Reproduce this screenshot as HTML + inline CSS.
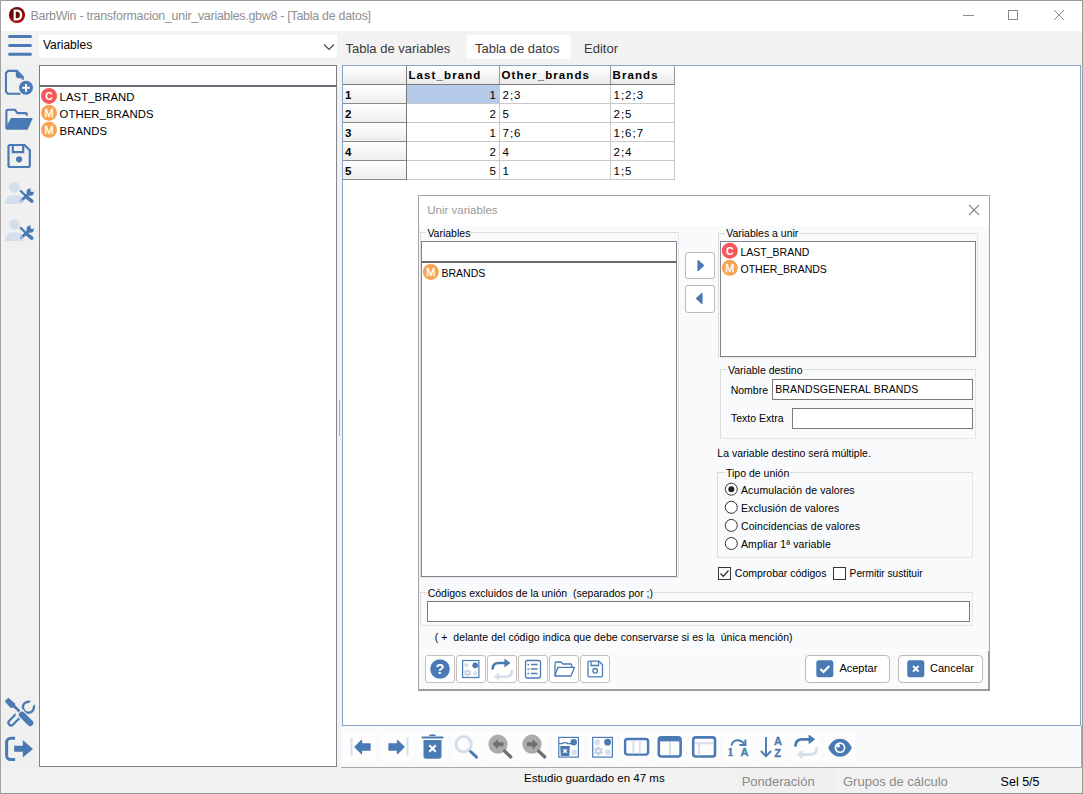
<!DOCTYPE html>
<html><head><meta charset="utf-8"><title>BarbWin</title>
<style>
html,body{margin:0;padding:0;}
body{width:1083px;height:794px;position:relative;overflow:hidden;background:#f2f2f2;font-family:"Liberation Sans", sans-serif;}
.r{position:absolute;display:block;}
.t{position:absolute;white-space:pre;line-height:1;}
</style></head><body>
<div class="r" style="left:0px;top:0px;width:1083px;height:794px;background:#f2f2f2;"></div>
<div class="r" style="left:1px;top:1px;width:1081px;height:30px;background:#fff;"></div>
<div class="r" style="left:0px;top:0px;width:1083px;height:1px;background:#9a9a9a;"></div>
<div class="r" style="left:0px;top:0px;width:1px;height:794px;background:#a3a3a3;"></div>
<div class="r" style="left:1082px;top:0px;width:1px;height:794px;background:#9a9a9a;"></div>
<div class="r" style="left:0px;top:793px;width:1083px;height:1px;background:#9a9a9a;"></div>
<svg class="r" style="left:8px;top:6px;" width="19" height="19" viewBox="0 0 19 19"><defs><radialGradient id="dg" cx="40%" cy="35%" r="70%"><stop offset="0" stop-color="#4a0808"/><stop offset="0.55" stop-color="#7a0a0a"/><stop offset="1" stop-color="#c00808"/></radialGradient></defs>
<circle cx="9" cy="9" r="8.1" fill="url(#dg)"/>
<path d="M5.6 3.6 H9 C12.6 3.6 14.2 6 14.2 9 C14.2 12 12.6 14.4 9 14.4 H5.6 Z M7.8 5.8 V12.2 H9 C11 12.2 11.9 10.8 11.9 9 C11.9 7.2 11 5.8 9 5.8 Z" fill="#fff"/></svg>
<div class="t" style="left:30.50px;top:9.70px;font-size:12.4px;color:#8f8f8f;font-weight:normal;letter-spacing:-0.25px;">BarbWin - transformacion_unir_variables.gbw8 - [Tabla de datos]</div>
<div class="r" style="left:963px;top:15px;width:11px;height:1px;background:#8c8c8c;"></div>
<div class="r" style="left:1008px;top:10px;width:10px;height:10px;border:1px solid #8c8c8c;box-sizing:border-box;"></div>
<svg class="r" style="left:1053px;top:9px;" width="12" height="12" viewBox="0 0 12 12"><path d="M1 1 L11 11 M11 1 L1 11" stroke="#8c8c8c" stroke-width="1"/></svg>
<div class="r" style="left:2px;top:64px;width:37px;height:185px;background:#f0f0f0;"></div>
<div class="r" style="left:2px;top:694px;width:37px;height:74px;background:#f0f0f0;"></div>
<svg class="r" style="left:6px;top:33px;" width="28" height="24" viewBox="0 0 28 24"><g stroke="#4a7ab3" stroke-width="3" stroke-linecap="round"><path d="M3.6 3.6 H24.4"/><path d="M3.6 12.4 H24.4"/><path d="M3.6 21.2 H24.4"/></g></svg>
<svg class="r" style="left:3px;top:66px;" width="34" height="32" viewBox="0 0 34 32"><path d="M13 4.9 H5 L2.95 6.9 V25.8 L5 27.8 H17.6" fill="none" stroke="#4a7ab3" stroke-width="2.1"/>
<path d="M12.8 3.85 H14.3 L20.8 10.4 V13.8 H18.8 V12.2 H14.5 L12.8 10.5 Z" fill="#4a7ab3"/>
<circle cx="23" cy="21.8" r="7.8" fill="#f0f0f0"/>
<circle cx="23" cy="21.8" r="7" fill="#4a7ab3"/>
<path d="M23 17.9 V25.7 M19.1 21.8 H26.9" stroke="#fff" stroke-width="2"/></svg>
<svg class="r" style="left:4px;top:107px;" width="32" height="26" viewBox="0 0 32 26"><path d="M2.4 21.5 V4.2 a1.5 1.5 0 0 1 1.5 -1.5 H10.9 L13.5 6.1 H21.4 a1.5 1.5 0 0 1 1.5 1.5 V8.8" fill="none" stroke="#4a7ab3" stroke-width="2.1"/>
<path d="M7 11.1 H28.8 L23.7 22.7 H3 a1.6 1.6 0 0 1 -1.6 -1.6 Z" fill="#4a7ab3"/></svg>
<svg class="r" style="left:6px;top:143px;" width="27" height="27" viewBox="0 0 27 27"><path d="M2.5 3.5 a1.5 1.5 0 0 1 1.5 -1.5 H18.5 L23.8 7.2 V22.5 a1.5 1.5 0 0 1 -1.5 1.5 H4 a1.5 1.5 0 0 1 -1.5 -1.5 Z" fill="none" stroke="#4a7ab3" stroke-width="2.2"/>
<path d="M6.8 2.5 V9.2 H17.2 V2.5" fill="none" stroke="#4a7ab3" stroke-width="2.2"/>
<circle cx="13.1" cy="16.3" r="3.1" fill="#4a7ab3"/></svg>
<svg class="r" style="left:4px;top:181px;" width="32" height="24" viewBox="0 0 32 24"><circle cx="10.5" cy="6.3" r="5.4" fill="#d5dfeb"/>
<path d="M1 23 C1 17.5 3.5 14.2 10 14.2 C15 14.2 17 15 18.5 16.5 V23 Z" fill="#d5dfeb"/>
<g stroke="#4a7ab3" stroke-linecap="round"><path d="M16.8 10 L22.3 15.5" stroke-width="2.4"/><path d="M22.5 15.8 L27.8 20.2" stroke-width="3.6"/>
<path d="M17.6 19.6 L24.8 12.6" stroke-width="2.8"/></g>
<circle cx="26.2" cy="11.2" r="3.6" fill="#4a7ab3"/><circle cx="28.3" cy="9" r="2" fill="#f0f0f0"/><circle cx="17.9" cy="19.4" r="0.8" fill="#fff"/></svg>
<svg class="r" style="left:4px;top:218px;" width="32" height="24" viewBox="0 0 32 24"><circle cx="10.5" cy="6.3" r="5.4" fill="#d5dfeb"/>
<path d="M1 23 C1 17.5 3.5 14.2 10 14.2 C15 14.2 17 15 18.5 16.5 V23 Z" fill="#d5dfeb"/>
<g stroke="#4a7ab3" stroke-linecap="round"><path d="M16.8 10 L22.3 15.5" stroke-width="2.4"/><path d="M22.5 15.8 L27.8 20.2" stroke-width="3.6"/>
<path d="M17.6 19.6 L24.8 12.6" stroke-width="2.8"/></g>
<circle cx="26.2" cy="11.2" r="3.6" fill="#4a7ab3"/><circle cx="28.3" cy="9" r="2" fill="#f0f0f0"/><circle cx="17.9" cy="19.4" r="0.8" fill="#fff"/></svg>
<svg class="r" style="left:4px;top:696px;" width="34" height="34" viewBox="0 0 34 34"><circle cx="24.4" cy="11.2" r="6.7" fill="#4a7ab3"/><circle cx="24.4" cy="11.2" r="4.3" fill="#f0f0f0"/>
<path d="M25.5 10 L33.5 2" stroke="#f0f0f0" stroke-width="5"/>
<path d="M12.2 17.8 L5 25 a2.7 2.7 0 0 0 3.8 3.8 L15.6 22" fill="none" stroke="#4a7ab3" stroke-width="2.2"/>
<path d="M19 13.5 L12.5 20" stroke="#f0f0f0" stroke-width="4"/>
<path d="M10.5 10 L17.5 17" stroke="#f0f0f0" stroke-width="4.6"/>
<path d="M0.95 5.25 L4.35 2.08 L10.9 7.75 L11.1 11.15 L6.6 11.6 Z" fill="#4a7ab3" stroke="#4a7ab3" stroke-width="0.6" stroke-linejoin="round"/>
<path d="M10.5 10.5 L17.5 17.5" stroke="#4a7ab3" stroke-width="2.5"/>
<path d="M18 18.8 L26.2 27" stroke="#f0f0f0" stroke-width="8.4" stroke-linecap="round"/>
<path d="M18 18.8 L26.2 27" stroke="#4a7ab3" stroke-width="6.2" stroke-linecap="round"/></svg>
<svg class="r" style="left:4px;top:736px;" width="32" height="27" viewBox="0 0 32 27"><path d="M11.1 2.35 H6.6 a4 4 0 0 0 -4 4 V19.5 a4 4 0 0 0 4 4 H11.1" fill="none" stroke="#4a7ab3" stroke-width="3"/>
<path d="M10.1 9.7 H18.8 V4 L29 12.9 L18.8 21.6 V15.75 H10.1 Z" fill="#4a7ab3"/></svg>
<div class="r" style="left:39px;top:35px;width:298px;height:23px;background:#fff;"></div>
<div class="t" style="left:43.00px;top:39.04px;font-size:12px;color:#000;font-weight:normal;">Variables</div>
<svg class="r" style="left:323px;top:43px;" width="12" height="8" viewBox="0 0 12 8"><path d="M1 1.5 L6 6.5 L11 1.5" fill="none" stroke="#444" stroke-width="1.1"/></svg>
<div class="r" style="left:39px;top:65px;width:298px;height:22px;background:#fff;border:1px solid #7b7b7b;box-sizing:border-box;"></div>
<div class="r" style="left:39px;top:85px;width:298px;height:2px;background:#6b6e76;"></div>
<div class="r" style="left:39px;top:87px;width:298px;height:680px;background:#fff;border:1px solid #80858e;border-top:none;box-sizing:border-box;"></div>
<svg class="r" style="left:40px;top:87px;" width="18" height="18" viewBox="0 0 18 18"><circle cx="9" cy="8.900000000000006" r="8" fill="#f4585a"/><text x="9" y="12.800000000000006" text-anchor="middle" font-family="Liberation Sans" font-weight="bold" font-size="10.5" fill="#fff">C</text></svg>
<svg class="r" style="left:40px;top:104px;" width="18" height="18" viewBox="0 0 18 18"><circle cx="9" cy="8.799999999999997" r="8" fill="#f8a34f"/><text x="9" y="12.799999999999997" text-anchor="middle" font-family="Liberation Sans" font-weight="normal" font-size="11" fill="#fff" stroke="#fff" stroke-width="0.35">M</text></svg>
<svg class="r" style="left:40px;top:121px;" width="18" height="18" viewBox="0 0 18 18"><circle cx="9" cy="8.800000000000011" r="8" fill="#f8a34f"/><text x="9" y="12.800000000000011" text-anchor="middle" font-family="Liberation Sans" font-weight="normal" font-size="11" fill="#fff" stroke="#fff" stroke-width="0.35">M</text></svg>
<div class="t" style="left:59.50px;top:91.93px;font-size:11.3px;color:#000;font-weight:normal;letter-spacing:0.1px;">LAST_BRAND</div>
<div class="t" style="left:59.50px;top:108.93px;font-size:11.3px;color:#000;font-weight:normal;letter-spacing:0.1px;">OTHER_BRANDS</div>
<div class="t" style="left:59.50px;top:125.93px;font-size:11.3px;color:#000;font-weight:normal;letter-spacing:0.1px;">BRANDS</div>
<div class="r" style="left:339px;top:400px;width:1px;height:36px;background:#b0b0b0;"></div>
<div class="r" style="left:467px;top:35px;width:104px;height:24px;background:#fff;"></div>
<div class="t" style="left:345.50px;top:41.80px;font-size:13px;color:#3a3a3a;font-weight:normal;">Tabla de variables</div>
<div class="t" style="left:475.00px;top:41.80px;font-size:13px;color:#3a3a3a;font-weight:normal;">Tabla de datos</div>
<div class="t" style="left:584.00px;top:41.80px;font-size:13px;color:#3a3a3a;font-weight:normal;">Editor</div>
<div class="r" style="left:342px;top:65px;width:739px;height:661px;background:#fff;border:1px solid #86a3c9;box-sizing:border-box;"></div>
<div class="r" style="left:343px;top:66px;width:332px;height:19px;background:linear-gradient(#ffffff,#e9e9e9);"></div>
<div class="r" style="left:343px;top:85px;width:64px;height:19px;background:linear-gradient(#ffffff,#ececec);"></div>
<div class="r" style="left:343px;top:104px;width:64px;height:19px;background:linear-gradient(#ffffff,#ececec);"></div>
<div class="r" style="left:343px;top:123px;width:64px;height:19px;background:linear-gradient(#ffffff,#ececec);"></div>
<div class="r" style="left:343px;top:142px;width:64px;height:19px;background:linear-gradient(#ffffff,#ececec);"></div>
<div class="r" style="left:343px;top:161px;width:64px;height:19px;background:linear-gradient(#ffffff,#ececec);"></div>
<div class="r" style="left:407px;top:85px;width:92px;height:18px;background:#b6caea;"></div>
<div class="r" style="left:406px;top:103px;width:269px;height:1px;background:#c9c9c9;"></div>
<div class="r" style="left:406px;top:122px;width:269px;height:1px;background:#c9c9c9;"></div>
<div class="r" style="left:406px;top:141px;width:269px;height:1px;background:#c9c9c9;"></div>
<div class="r" style="left:406px;top:160px;width:269px;height:1px;background:#c9c9c9;"></div>
<div class="r" style="left:406px;top:179px;width:269px;height:1px;background:#c9c9c9;"></div>
<div class="r" style="left:499px;top:84px;width:1px;height:96px;background:#c9c9c9;"></div>
<div class="r" style="left:610px;top:84px;width:1px;height:96px;background:#c9c9c9;"></div>
<div class="r" style="left:674px;top:84px;width:1px;height:96px;background:#c9c9c9;"></div>
<div class="r" style="left:343px;top:84px;width:332px;height:1px;background:#7a7a7a;"></div>
<div class="r" style="left:343px;top:103px;width:64px;height:1px;background:#8a8a8a;"></div>
<div class="r" style="left:343px;top:122px;width:64px;height:1px;background:#8a8a8a;"></div>
<div class="r" style="left:343px;top:141px;width:64px;height:1px;background:#8a8a8a;"></div>
<div class="r" style="left:343px;top:160px;width:64px;height:1px;background:#8a8a8a;"></div>
<div class="r" style="left:343px;top:179px;width:64px;height:1px;background:#8a8a8a;"></div>
<div class="r" style="left:406px;top:66px;width:1px;height:114px;background:#7a7a7a;"></div>
<div class="r" style="left:499px;top:66px;width:1px;height:18px;background:#9a9a9a;"></div>
<div class="r" style="left:610px;top:66px;width:1px;height:18px;background:#9a9a9a;"></div>
<div class="r" style="left:674px;top:66px;width:1px;height:19px;background:#9a9a9a;"></div>
<div class="t" style="left:408.50px;top:70.27px;font-size:11.5px;color:#000;font-weight:bold;letter-spacing:1.1px;">Last_brand</div>
<div class="t" style="left:501.50px;top:70.27px;font-size:11.5px;color:#000;font-weight:bold;letter-spacing:1.1px;">Other_brands</div>
<div class="t" style="left:612.50px;top:70.27px;font-size:11.5px;color:#000;font-weight:bold;letter-spacing:1.1px;">Brands</div>
<div class="t" style="left:345.00px;top:89.87px;font-size:11.5px;color:#000;font-weight:bold;">1</div>
<div class="t" style="left:407px;width:89px;text-align:right;top:90.37px;font-size:11.5px;">1</div>
<div class="t" style="left:502.50px;top:90.37px;font-size:11.5px;color:#000;font-weight:normal;letter-spacing:1.0px;">2;3</div>
<div class="t" style="left:613.50px;top:90.37px;font-size:11.5px;color:#000;font-weight:normal;letter-spacing:1.0px;">1;2;3</div>
<div class="t" style="left:345.00px;top:108.87px;font-size:11.5px;color:#000;font-weight:bold;">2</div>
<div class="t" style="left:407px;width:89px;text-align:right;top:109.37px;font-size:11.5px;">2</div>
<div class="t" style="left:502.50px;top:109.37px;font-size:11.5px;color:#000;font-weight:normal;letter-spacing:1.0px;">5</div>
<div class="t" style="left:613.50px;top:109.37px;font-size:11.5px;color:#000;font-weight:normal;letter-spacing:1.0px;">2;5</div>
<div class="t" style="left:345.00px;top:127.87px;font-size:11.5px;color:#000;font-weight:bold;">3</div>
<div class="t" style="left:407px;width:89px;text-align:right;top:128.37px;font-size:11.5px;">1</div>
<div class="t" style="left:502.50px;top:128.37px;font-size:11.5px;color:#000;font-weight:normal;letter-spacing:1.0px;">7;6</div>
<div class="t" style="left:613.50px;top:128.37px;font-size:11.5px;color:#000;font-weight:normal;letter-spacing:1.0px;">1;6;7</div>
<div class="t" style="left:345.00px;top:146.87px;font-size:11.5px;color:#000;font-weight:bold;">4</div>
<div class="t" style="left:407px;width:89px;text-align:right;top:147.37px;font-size:11.5px;">2</div>
<div class="t" style="left:502.50px;top:147.37px;font-size:11.5px;color:#000;font-weight:normal;letter-spacing:1.0px;">4</div>
<div class="t" style="left:613.50px;top:147.37px;font-size:11.5px;color:#000;font-weight:normal;letter-spacing:1.0px;">2;4</div>
<div class="t" style="left:345.00px;top:165.87px;font-size:11.5px;color:#000;font-weight:bold;">5</div>
<div class="t" style="left:407px;width:89px;text-align:right;top:166.37px;font-size:11.5px;">5</div>
<div class="t" style="left:502.50px;top:166.37px;font-size:11.5px;color:#000;font-weight:normal;letter-spacing:1.0px;">1</div>
<div class="t" style="left:613.50px;top:166.37px;font-size:11.5px;color:#000;font-weight:normal;letter-spacing:1.0px;">1;5</div>
<div class="r" style="left:418px;top:195px;width:572px;height:496px;background:#f9fafc;border:1px solid #a3a3a3;box-sizing:border-box;"></div>
<div class="r" style="left:419px;top:196px;width:570px;height:30px;background:#fff;"></div>
<div class="t" style="left:427.30px;top:204.97px;font-size:11.5px;color:#9a9a9a;font-weight:normal;">Unir variables</div>
<svg class="r" style="left:968px;top:204px;" width="12" height="12" viewBox="0 0 12 12"><path d="M1 1 L11 11 M11 1 L1 11" stroke="#888" stroke-width="1.1"/></svg>
<div class="r" style="left:420px;top:232px;width:259px;height:346px;border:1px solid #dcdcdc;box-sizing:border-box;border-right-color:#e6e6e6;border-bottom-color:#e6e6e6;"></div>
<div class="t" style="left:426.40px;top:227.91px;font-size:10.5px;background:#f9fafc;padding:0 1px;">Variables</div>
<div class="r" style="left:421px;top:241px;width:256px;height:22px;background:#fff;border:1px solid #80858e;box-sizing:border-box;border-bottom:2px solid #6a6a6a;"></div>
<div class="r" style="left:421px;top:263px;width:256px;height:314px;background:#fff;border:1px solid #80858e;border-top:none;box-sizing:border-box;"></div>
<svg class="r" style="left:422px;top:263px;" width="18" height="18" viewBox="0 0 18 18"><circle cx="8.800000000000011" cy="8.899999999999977" r="8" fill="#f8a34f"/><text x="8.800000000000011" y="12.899999999999977" text-anchor="middle" font-family="Liberation Sans" font-weight="normal" font-size="11" fill="#fff" stroke="#fff" stroke-width="0.35">M</text></svg>
<div class="t" style="left:441.50px;top:267.51px;font-size:10.5px;color:#000;font-weight:normal;">BRANDS</div>
<div class="r" style="left:685px;top:252px;width:30px;height:27px;background:#fff;border:1px solid #bdb9b5;border-radius:3px;box-sizing:border-box;"></div>
<svg class="r" style="left:685px;top:252px;" width="30" height="27" viewBox="0 0 30 27"><path d="M13 8.5 L18.5 13.5 L13 18.5 Z" fill="#4a7ab3" stroke="#4a7ab3" stroke-width="1.2" stroke-linejoin="round"/></svg>
<div class="r" style="left:685px;top:285px;width:30px;height:28px;background:#fff;border:1px solid #bdb9b5;border-radius:3px;box-sizing:border-box;"></div>
<svg class="r" style="left:685px;top:285px;" width="30" height="27" viewBox="0 0 30 27"><path d="M17 8.5 L11.5 13.5 L17 18.5 Z" fill="#4a7ab3" stroke="#4a7ab3" stroke-width="1.2" stroke-linejoin="round"/></svg>
<div class="r" style="left:718px;top:233px;width:260px;height:125px;border:1px solid #dcdcdc;box-sizing:border-box;border-right-color:#e6e6e6;border-bottom-color:#e6e6e6;"></div>
<div class="t" style="left:725.20px;top:227.91px;font-size:10.5px;background:#f9fafc;padding:0 1px;">Variables a unir</div>
<div class="r" style="left:720px;top:241px;width:256px;height:116px;background:#fff;border:1px solid #80858e;box-sizing:border-box;"></div>
<svg class="r" style="left:721px;top:242px;" width="18" height="18" viewBox="0 0 18 18"><circle cx="8.799999999999955" cy="8.699999999999989" r="8" fill="#f4585a"/><text x="8.799999999999955" y="12.599999999999989" text-anchor="middle" font-family="Liberation Sans" font-weight="bold" font-size="10.5" fill="#fff">C</text></svg>
<svg class="r" style="left:721px;top:259px;" width="18" height="18" viewBox="0 0 18 18"><circle cx="8.799999999999955" cy="8.800000000000011" r="8" fill="#f8a34f"/><text x="8.799999999999955" y="12.800000000000011" text-anchor="middle" font-family="Liberation Sans" font-weight="normal" font-size="11" fill="#fff" stroke="#fff" stroke-width="0.35">M</text></svg>
<div class="t" style="left:740.50px;top:246.71px;font-size:10.5px;color:#000;font-weight:normal;">LAST_BRAND</div>
<div class="t" style="left:740.50px;top:263.81px;font-size:10.5px;color:#000;font-weight:normal;">OTHER_BRANDS</div>
<div class="r" style="left:720px;top:369px;width:256px;height:70px;border:1px solid #dcdcdc;box-sizing:border-box;border-right-color:#e6e6e6;border-bottom-color:#e6e6e6;"></div>
<div class="t" style="left:727.00px;top:364.91px;font-size:10.5px;background:#f9fafc;padding:0 1px;">Variable destino</div>
<div class="t" style="left:730.70px;top:384.81px;font-size:10.5px;color:#000;font-weight:normal;">Nombre</div>
<div class="r" style="left:772px;top:379px;width:201px;height:21px;background:#fff;border:1px solid #7a7a7a;box-sizing:border-box;"></div>
<div class="t" style="left:775.20px;top:384.21px;font-size:10.5px;color:#000;font-weight:normal;letter-spacing:0.15px;">BRANDSGENERAL BRANDS</div>
<div class="t" style="left:731.00px;top:412.91px;font-size:10.5px;color:#000;font-weight:normal;">Texto Extra</div>
<div class="r" style="left:792px;top:408px;width:181px;height:21px;background:#fff;border:1px solid #7a7a7a;box-sizing:border-box;"></div>
<div class="t" style="left:717.30px;top:447.71px;font-size:10.5px;color:#000;font-weight:normal;">La variable destino será múltiple.</div>
<div class="r" style="left:717px;top:472px;width:256px;height:86px;border:1px solid #dcdcdc;box-sizing:border-box;border-right-color:#e6e6e6;border-bottom-color:#e6e6e6;"></div>
<div class="t" style="left:725.00px;top:468.31px;font-size:10.5px;background:#f9fafc;padding:0 1px;">Tipo de unión</div>
<svg class="r" style="left:724px;top:482px;" width="15" height="15" viewBox="0 0 15 15"><circle cx="7.3" cy="7.199999999999989" r="6" fill="#fff" stroke="#333" stroke-width="1"/><circle cx="7.3" cy="7.199999999999989" r="3" fill="#222"/></svg>
<div class="t" style="left:741.00px;top:484.71px;font-size:10.5px;color:#000;font-weight:normal;letter-spacing:0.1px;">Acumulación de valores</div>
<svg class="r" style="left:724px;top:500px;" width="15" height="15" viewBox="0 0 15 15"><circle cx="7.3" cy="7.300000000000011" r="6" fill="#fff" stroke="#333" stroke-width="1"/></svg>
<div class="t" style="left:741.00px;top:502.81px;font-size:10.5px;color:#000;font-weight:normal;letter-spacing:0.1px;">Exclusión de valores</div>
<svg class="r" style="left:724px;top:518px;" width="15" height="15" viewBox="0 0 15 15"><circle cx="7.3" cy="7.399999999999977" r="6" fill="#fff" stroke="#333" stroke-width="1"/></svg>
<div class="t" style="left:741.00px;top:520.91px;font-size:10.5px;color:#000;font-weight:normal;letter-spacing:0.1px;">Coincidencias de valores</div>
<svg class="r" style="left:724px;top:536px;" width="15" height="15" viewBox="0 0 15 15"><circle cx="7.3" cy="7.5" r="6" fill="#fff" stroke="#333" stroke-width="1"/></svg>
<div class="t" style="left:741.00px;top:539.01px;font-size:10.5px;color:#000;font-weight:normal;letter-spacing:0.1px;">Ampliar 1ª variable</div>
<div class="r" style="left:718px;top:567px;width:13px;height:13px;background:#fff;border:1px solid #333;box-sizing:border-box;"></div>
<svg class="r" style="left:718px;top:567px;" width="13" height="13" viewBox="0 0 13 13"><path d="M2.5 6.5 L5.2 9.3 L10.5 3.5" fill="none" stroke="#222" stroke-width="1.2"/></svg>
<div class="t" style="left:734.80px;top:568.11px;font-size:10.5px;color:#000;font-weight:normal;">Comprobar códigos</div>
<div class="r" style="left:833px;top:567px;width:13px;height:13px;background:#fff;border:1px solid #333;box-sizing:border-box;"></div>
<div class="t" style="left:849.60px;top:569.17px;font-size:10.2px;color:#000;font-weight:normal;">Permitir sustituir</div>
<div class="r" style="left:420px;top:592px;width:553px;height:34px;border:1px solid #dcdcdc;box-sizing:border-box;border-right-color:#e6e6e6;border-bottom-color:#e6e6e6;"></div>
<div class="t" style="left:426.70px;top:588.31px;font-size:10.5px;background:#f9fafc;padding:0 1px;">Códigos excluidos de la unión  (separados por ;)</div>
<div class="r" style="left:427px;top:601px;width:543px;height:21px;background:#fff;border:1px solid #7a7a7a;box-sizing:border-box;"></div>
<div class="t" style="left:434.70px;top:632.31px;font-size:10.5px;color:#000;font-weight:normal;letter-spacing:0.06px;">( +  delante del código indica que debe conservarse si es la  única mención)</div>
<div class="r" style="left:419px;top:650px;width:571px;height:41px;background:#f9fafc;border-top:1px solid #ffffff;border-right:2px solid #9c9c9c;border-bottom:2px solid #9c9c9c;box-sizing:border-box;"></div>
<div class="r" style="left:418px;top:650px;width:1px;height:41px;background:#a3a3a3;"></div>
<div class="r" style="left:425px;top:655px;width:30px;height:28px;background:#fff;border:1px solid #c3bfbb;border-radius:3px;box-sizing:border-box;"></div>
<div class="r" style="left:456px;top:655px;width:30px;height:28px;background:#fff;border:1px solid #c3bfbb;border-radius:3px;box-sizing:border-box;"></div>
<div class="r" style="left:487px;top:655px;width:30px;height:28px;background:#fff;border:1px solid #c3bfbb;border-radius:3px;box-sizing:border-box;"></div>
<div class="r" style="left:518px;top:655px;width:30px;height:28px;background:#fff;border:1px solid #c3bfbb;border-radius:3px;box-sizing:border-box;"></div>
<div class="r" style="left:549px;top:655px;width:30px;height:28px;background:#fff;border:1px solid #c3bfbb;border-radius:3px;box-sizing:border-box;"></div>
<div class="r" style="left:580px;top:655px;width:30px;height:28px;background:#fff;border:1px solid #c3bfbb;border-radius:3px;box-sizing:border-box;"></div>
<svg class="r" style="left:425px;top:655px;" width="30" height="28" viewBox="0 0 30 28"><circle cx="15" cy="14" r="9.8" fill="#4a7ab3"/><text x="15" y="19.3" text-anchor="middle" font-family="Liberation Sans" font-weight="bold" font-size="14.5" fill="#fff">?</text></svg>
<svg class="r" style="left:456px;top:655px;" width="30" height="28" viewBox="0 0 30 28"><rect x="6.6" y="5.5" width="16.3" height="17" fill="none" stroke="#4a7ab3" stroke-width="1.2"/>
<circle cx="19.2" cy="10.3" r="2.9" fill="#4a7ab3"/><circle cx="10.3" cy="10.1" r="2.2" fill="#d5dfeb"/><circle cx="19.3" cy="18.4" r="2.2" fill="#d5dfeb"/>
<circle cx="11.5" cy="17.8" r="2.592" fill="#c3d2e3"/><rect x="10.6" y="14.100000000000001" width="1.8" height="7.4" fill="#c3d2e3" transform="rotate(0 11.5 17.8)"/><rect x="10.6" y="14.100000000000001" width="1.8" height="7.4" fill="#c3d2e3" transform="rotate(60 11.5 17.8)"/><rect x="10.6" y="14.100000000000001" width="1.8" height="7.4" fill="#c3d2e3" transform="rotate(120 11.5 17.8)"/><circle cx="11.5" cy="17.8" r="1.08" fill="#fff"/></svg>
<svg class="r" style="left:487px;top:655px;" width="30" height="28" viewBox="0 0 30 28"><g transform="translate(0.7 -0.4) scale(0.9)"><path d="M5.5 15.5 Q6 9.3 12 9.3 H20" fill="none" stroke="#4a7ab3" stroke-width="2.8" stroke-linecap="round"/><path d="M19 5.2 L24.8 9.3 L19 13.5 Z" fill="#4a7ab3" stroke="#4a7ab3" stroke-width="0.8" stroke-linejoin="round"/>
<path d="M26.8 18.3 Q26.5 24.5 20.5 24.5 H12" fill="none" stroke="#d5dfeb" stroke-width="2.8" stroke-linecap="round"/><path d="M12.3 20.4 L7.2 24.5 L12.3 28.5 Z" fill="#d5dfeb" stroke="#d5dfeb" stroke-width="0.8" stroke-linejoin="round"/></g></svg>
<svg class="r" style="left:518px;top:655px;" width="30" height="28" viewBox="0 0 30 28"><rect x="7.5" y="5.5" width="15" height="17.5" rx="2" fill="none" stroke="#4a7ab3" stroke-width="1.3"/>
<g stroke="#4a7ab3" stroke-width="1.5"><path d="M13 9.5 H19.5"/><path d="M13 14 H19.5"/><path d="M13 18.5 H19.5"/></g>
<g fill="#4a7ab3"><rect x="9.5" y="8.8" width="1.6" height="1.6"/><rect x="9.5" y="17.8" width="1.6" height="1.6"/></g>
<path d="M9.2 13.8 L10.2 14.8 L11.8 13" fill="none" stroke="#4a7ab3" stroke-width="1"/></svg>
<svg class="r" style="left:549px;top:655px;" width="30" height="28" viewBox="0 0 30 28"><path d="M6 20.5 V8.5 a1.5 1.5 0 0 1 1.5 -1.5 H12 L14 9 H21.5 a1.3 1.3 0 0 1 1.3 1.3 V12" fill="none" stroke="#4a7ab3" stroke-width="1.3"/>
<path d="M9 12.3 H25.5 L22 21 H5.8 Z" fill="none" stroke="#4a7ab3" stroke-width="1.3" stroke-linejoin="round"/></svg>
<svg class="r" style="left:580px;top:655px;" width="30" height="28" viewBox="0 0 30 28"><path d="M8 7.5 a1.3 1.3 0 0 1 1.3 -1.3 H19 L22.5 9.7 V20.5 a1.3 1.3 0 0 1 -1.3 1.3 H9.3 a1.3 1.3 0 0 1 -1.3 -1.3 Z" fill="none" stroke="#4a7ab3" stroke-width="1.3"/>
<path d="M11 6.5 V10.5 H18.5 V6.5" fill="none" stroke="#4a7ab3" stroke-width="1.3"/>
<circle cx="15.2" cy="15.8" r="2.3" fill="none" stroke="#4a7ab3" stroke-width="1.3"/></svg>
<div class="r" style="left:805px;top:655px;width:85px;height:28px;background:#fff;border:1px solid #bdb9b5;border-radius:4px;box-sizing:border-box;"></div>
<svg class="r" style="left:816px;top:660px;" width="18" height="18" viewBox="0 0 18 18"><rect x="0.3" y="0.3" width="17" height="17" rx="2.5" fill="#4a7ab3"/><path d="M4.3 9 L7.5 12 L13.3 6" fill="none" stroke="#fff" stroke-width="2.2"/></svg>
<div class="t" style="left:839.40px;top:662.89px;font-size:11px;color:#000;font-weight:normal;">Aceptar</div>
<div class="r" style="left:898px;top:655px;width:85px;height:28px;background:#fff;border:1px solid #bdb9b5;border-radius:4px;box-sizing:border-box;"></div>
<svg class="r" style="left:907px;top:660px;" width="18" height="18" viewBox="0 0 18 18"><rect x="0.3" y="0.3" width="17" height="17" rx="2.5" fill="#4a7ab3"/><path d="M6 6 L11.6 11.6 M11.6 6 L6 11.6" fill="none" stroke="#fff" stroke-width="2"/></svg>
<div class="t" style="left:930.00px;top:662.89px;font-size:11px;color:#000;font-weight:normal;">Cancelar</div>
<div class="r" style="left:341px;top:726px;width:741px;height:42px;background:#f9fafc;"></div>
<div class="r" style="left:341px;top:767px;width:742px;height:1px;background:#a8a8a8;"></div>
<div class="r" style="left:1081px;top:726px;width:1px;height:42px;background:#a8a8a8;"></div>
<div class="r" style="left:344px;top:732px;width:32px;height:30px;background:#fdfdfe;border-radius:4px;"></div>
<div class="r" style="left:382px;top:732px;width:32px;height:30px;background:#fdfdfe;border-radius:4px;"></div>
<div class="r" style="left:416px;top:732px;width:32px;height:30px;background:#fdfdfe;border-radius:4px;"></div>
<div class="r" style="left:450px;top:732px;width:32px;height:30px;background:#fdfdfe;border-radius:4px;"></div>
<div class="r" style="left:484px;top:732px;width:32px;height:30px;background:#fdfdfe;border-radius:4px;"></div>
<div class="r" style="left:518px;top:732px;width:32px;height:30px;background:#fdfdfe;border-radius:4px;"></div>
<div class="r" style="left:552px;top:732px;width:32px;height:30px;background:#fdfdfe;border-radius:4px;"></div>
<div class="r" style="left:586px;top:732px;width:32px;height:30px;background:#fdfdfe;border-radius:4px;"></div>
<div class="r" style="left:620px;top:732px;width:32px;height:30px;background:#fdfdfe;border-radius:4px;"></div>
<div class="r" style="left:654px;top:732px;width:32px;height:30px;background:#fdfdfe;border-radius:4px;"></div>
<div class="r" style="left:688px;top:732px;width:32px;height:30px;background:#fdfdfe;border-radius:4px;"></div>
<div class="r" style="left:722px;top:732px;width:32px;height:30px;background:#fdfdfe;border-radius:4px;"></div>
<div class="r" style="left:756px;top:732px;width:32px;height:30px;background:#fdfdfe;border-radius:4px;"></div>
<div class="r" style="left:790px;top:732px;width:32px;height:30px;background:#fdfdfe;border-radius:4px;"></div>
<div class="r" style="left:824px;top:732px;width:32px;height:30px;background:#fdfdfe;border-radius:4px;"></div>
<svg class="r" style="left:344px;top:730px;" width="32" height="32" viewBox="0 0 32 32"><path d="M7.5 8.5 V25" stroke="#d5dfeb" stroke-width="2" stroke-linecap="round"/><path d="M11 17 L17.5 10.5 V14 H26 V20 H17.5 V23.5 Z" fill="#4a7ab3" stroke="#4a7ab3" stroke-width="1.3" stroke-linejoin="round"/></svg>
<svg class="r" style="left:382px;top:730px;" width="32" height="32" viewBox="0 0 32 32"><path d="M25.5 8.5 V25" stroke="#d5dfeb" stroke-width="2" stroke-linecap="round"/><path d="M22 17 L15.5 10.5 V14 H7 V20 H15.5 V23.5 Z" fill="#4a7ab3" stroke="#4a7ab3" stroke-width="1.3" stroke-linejoin="round"/></svg>
<svg class="r" style="left:416px;top:730px;" width="32" height="32" viewBox="0 0 32 32"><path d="M6.5 7.5 H26.5" stroke="#4a7ab3" stroke-width="2.2" stroke-linecap="round"/><path d="M13 6 a3 1.6 0 0 1 7 0" fill="#4a7ab3"/><path d="M7.5 10 H25.5 V26 a2.8 2.8 0 0 1 -2.8 2.8 H10.3 a2.8 2.8 0 0 1 -2.8 -2.8 Z" fill="#4a7ab3"/><path d="M13.3 15.3 L19.7 21.7 M19.7 15.3 L13.3 21.7" stroke="#fff" stroke-width="2.2"/></svg>
<svg class="r" style="left:450px;top:730px;" width="32" height="32" viewBox="0 0 32 32"><circle cx="13.6" cy="14.2" r="7.6" fill="none" stroke="#d5dfeb" stroke-width="3"/><path d="M20.5 21.5 L26.5 27.2" stroke="#4a7ab3" stroke-width="3" stroke-linecap="round"/></svg>
<svg class="r" style="left:484px;top:730px;" width="32" height="32" viewBox="0 0 32 32"><circle cx="14" cy="14.2" r="9.6" fill="#ababab"/><path d="M20.5 21 L26.8 27" stroke="#6f6f6f" stroke-width="3.2" stroke-linecap="round"/><path d="M9 14.2 L13.5 10 V12.7 H19 V15.7 H13.5 V18.4 Z" fill="#707070" stroke="#707070" stroke-width="1" stroke-linejoin="round"/></svg>
<svg class="r" style="left:518px;top:730px;" width="32" height="32" viewBox="0 0 32 32"><circle cx="14" cy="14.2" r="9.6" fill="#ababab"/><path d="M20.5 21 L26.8 27" stroke="#6f6f6f" stroke-width="3.2" stroke-linecap="round"/><path d="M19.5 14.2 L15 10 V12.7 H9.5 V15.7 H15 V18.4 Z" fill="#707070" stroke="#707070" stroke-width="1" stroke-linejoin="round"/></svg>
<svg class="r" style="left:552px;top:730px;" width="32" height="32" viewBox="0 0 32 32"><rect x="6.8" y="7.4" width="19.6" height="19.7" fill="none" stroke="#4a7ab3" stroke-width="1.2"/>
<path d="M7 13.6 H10 Q13 11.5 16 13.6 H20" fill="none" stroke="#4a7ab3" stroke-width="1.3"/>
<circle cx="21.7" cy="12.2" r="3.2" fill="#4a7ab3"/>
<path d="M8.2 16 H17.9 L17.3 26 H8.8 Z" fill="#4a7ab3"/><path d="M11.3 19.2 L14.8 22.7 M14.8 19.2 L11.3 22.7" stroke="#fff" stroke-width="1.4"/>
<circle cx="22" cy="22.3" r="2.8" fill="#d5dfeb"/></svg>
<svg class="r" style="left:586px;top:730px;" width="32" height="32" viewBox="0 0 32 32"><rect x="6.7" y="7.4" width="19.7" height="19.7" fill="none" stroke="#4a7ab3" stroke-width="1.2"/>
<circle cx="21.6" cy="12.2" r="3.4" fill="#4a7ab3"/><circle cx="11.2" cy="12.2" r="2.8" fill="#d5dfeb"/><circle cx="21.9" cy="22.3" r="2.8" fill="#d5dfeb"/>
<circle cx="12.5" cy="21" r="3.0959999999999996" fill="#c3d2e3"/><rect x="11.4" y="16.5" width="2.2" height="9.0" fill="#c3d2e3" transform="rotate(0 12.5 21)"/><rect x="11.4" y="16.5" width="2.2" height="9.0" fill="#c3d2e3" transform="rotate(60 12.5 21)"/><rect x="11.4" y="16.5" width="2.2" height="9.0" fill="#c3d2e3" transform="rotate(120 12.5 21)"/><circle cx="12.5" cy="21" r="1.2899999999999998" fill="#fdfdfe"/></svg>
<svg class="r" style="left:620px;top:730px;" width="32" height="32" viewBox="0 0 32 32"><rect x="5.1" y="9" width="23" height="15.6" rx="2.5" fill="none" stroke="#4a7ab3" stroke-width="2.4"/><path d="M13.3 10 V23.5 M19.8 10 V23.5" stroke="#d5dfeb" stroke-width="1.8"/></svg>
<svg class="r" style="left:654px;top:730px;" width="32" height="32" viewBox="0 0 32 32"><rect x="4.8" y="7.4" width="21.8" height="19.1" rx="2.5" fill="none" stroke="#4a7ab3" stroke-width="2.6"/><path d="M5 9.4 H26.5" stroke="#4a7ab3" stroke-width="4"/><path d="M16 12 V25" stroke="#d5dfeb" stroke-width="2"/></svg>
<svg class="r" style="left:688px;top:730px;" width="32" height="32" viewBox="0 0 32 32"><rect x="5.2" y="7.4" width="21.8" height="19.1" rx="2.5" fill="none" stroke="#4a7ab3" stroke-width="2.6"/><path d="M7 13.3 H26 M11.2 14 V25.5" stroke="#d5dfeb" stroke-width="2"/></svg>
<svg class="r" style="left:722px;top:730px;" width="32" height="32" viewBox="0 0 32 32"><path d="M9.4 15.4 C10.5 11.5 13 10.3 16 10.3 C18.5 10.3 20.5 11.5 22 13.8" fill="none" stroke="#4a7ab3" stroke-width="1.9"/><path d="M23.4 9.6 V15.1 H17.4" fill="none" stroke="#4a7ab3" stroke-width="2"/>
<text x="5.6" y="25.7" font-family="Liberation Serif" font-weight="bold" font-size="11.5" fill="#4a7ab3" stroke="#4a7ab3" stroke-width="0.3">1</text>
<text x="18.6" y="25.7" font-family="Liberation Sans" font-weight="bold" font-size="11" fill="#4a7ab3" stroke="#4a7ab3" stroke-width="0.3">A</text></svg>
<svg class="r" style="left:756px;top:730px;" width="32" height="32" viewBox="0 0 32 32"><path d="M10 6.9 V26" stroke="#4a7ab3" stroke-width="1.9"/><path d="M4.9 21 L10 26.2 L15.1 21" fill="none" stroke="#4a7ab3" stroke-width="1.9"/>
<text x="18" y="14.8" font-family="Liberation Sans" font-weight="bold" font-size="11" fill="#4a7ab3" stroke="#4a7ab3" stroke-width="0.3">A</text>
<text x="18.3" y="27" font-family="Liberation Sans" font-weight="bold" font-size="11" fill="#4a7ab3" stroke="#4a7ab3" stroke-width="0.3">Z</text></svg>
<svg class="r" style="left:790px;top:730px;" width="32" height="32" viewBox="0 0 32 32"><path d="M5.5 15.5 Q6 9.3 12 9.3 H20" fill="none" stroke="#4a7ab3" stroke-width="2.8" stroke-linecap="round"/><path d="M19 5.2 L24.8 9.3 L19 13.5 Z" fill="#4a7ab3" stroke="#4a7ab3" stroke-width="0.8" stroke-linejoin="round"/>
<path d="M26.8 18.3 Q26.5 24.5 20.5 24.5 H12" fill="none" stroke="#d5dfeb" stroke-width="2.8" stroke-linecap="round"/><path d="M12.3 20.4 L7.2 24.5 L12.3 28.5 Z" fill="#d5dfeb" stroke="#d5dfeb" stroke-width="0.8" stroke-linejoin="round"/></svg>
<svg class="r" style="left:824px;top:730px;" width="32" height="32" viewBox="0 0 32 32"><path d="M4.2 17.7 C7 11.5 11 8.7 16 8.7 C21 8.7 25 11.5 27.8 17.7 C25 23.9 21 26.7 16 26.7 C11 26.7 7 23.9 4.2 17.7 Z" fill="#4a7ab3"/>
<circle cx="16" cy="17.6" r="5.4" fill="#fff"/><circle cx="16.1" cy="17.8" r="3.7" fill="#4a7ab3"/><circle cx="14.2" cy="15.8" r="1.8" fill="#fff"/></svg>
<div class="r" style="left:738px;top:768px;width:97px;height:25px;background:#f0f0f0;"></div>
<div class="t" style="left:524.00px;top:773.27px;font-size:11.5px;color:#000;font-weight:normal;">Estudio guardado en 47 ms</div>
<div class="t" style="left:741.70px;top:775.00px;font-size:13px;color:#8a8a8a;font-weight:normal;">Ponderación</div>
<div class="t" style="left:843.00px;top:775.00px;font-size:13px;color:#8a8a8a;font-weight:normal;">Grupos de cálculo</div>
<div class="t" style="left:1000.60px;top:775.92px;font-size:12.5px;color:#000;font-weight:normal;">Sel 5/5</div>
</body></html>
